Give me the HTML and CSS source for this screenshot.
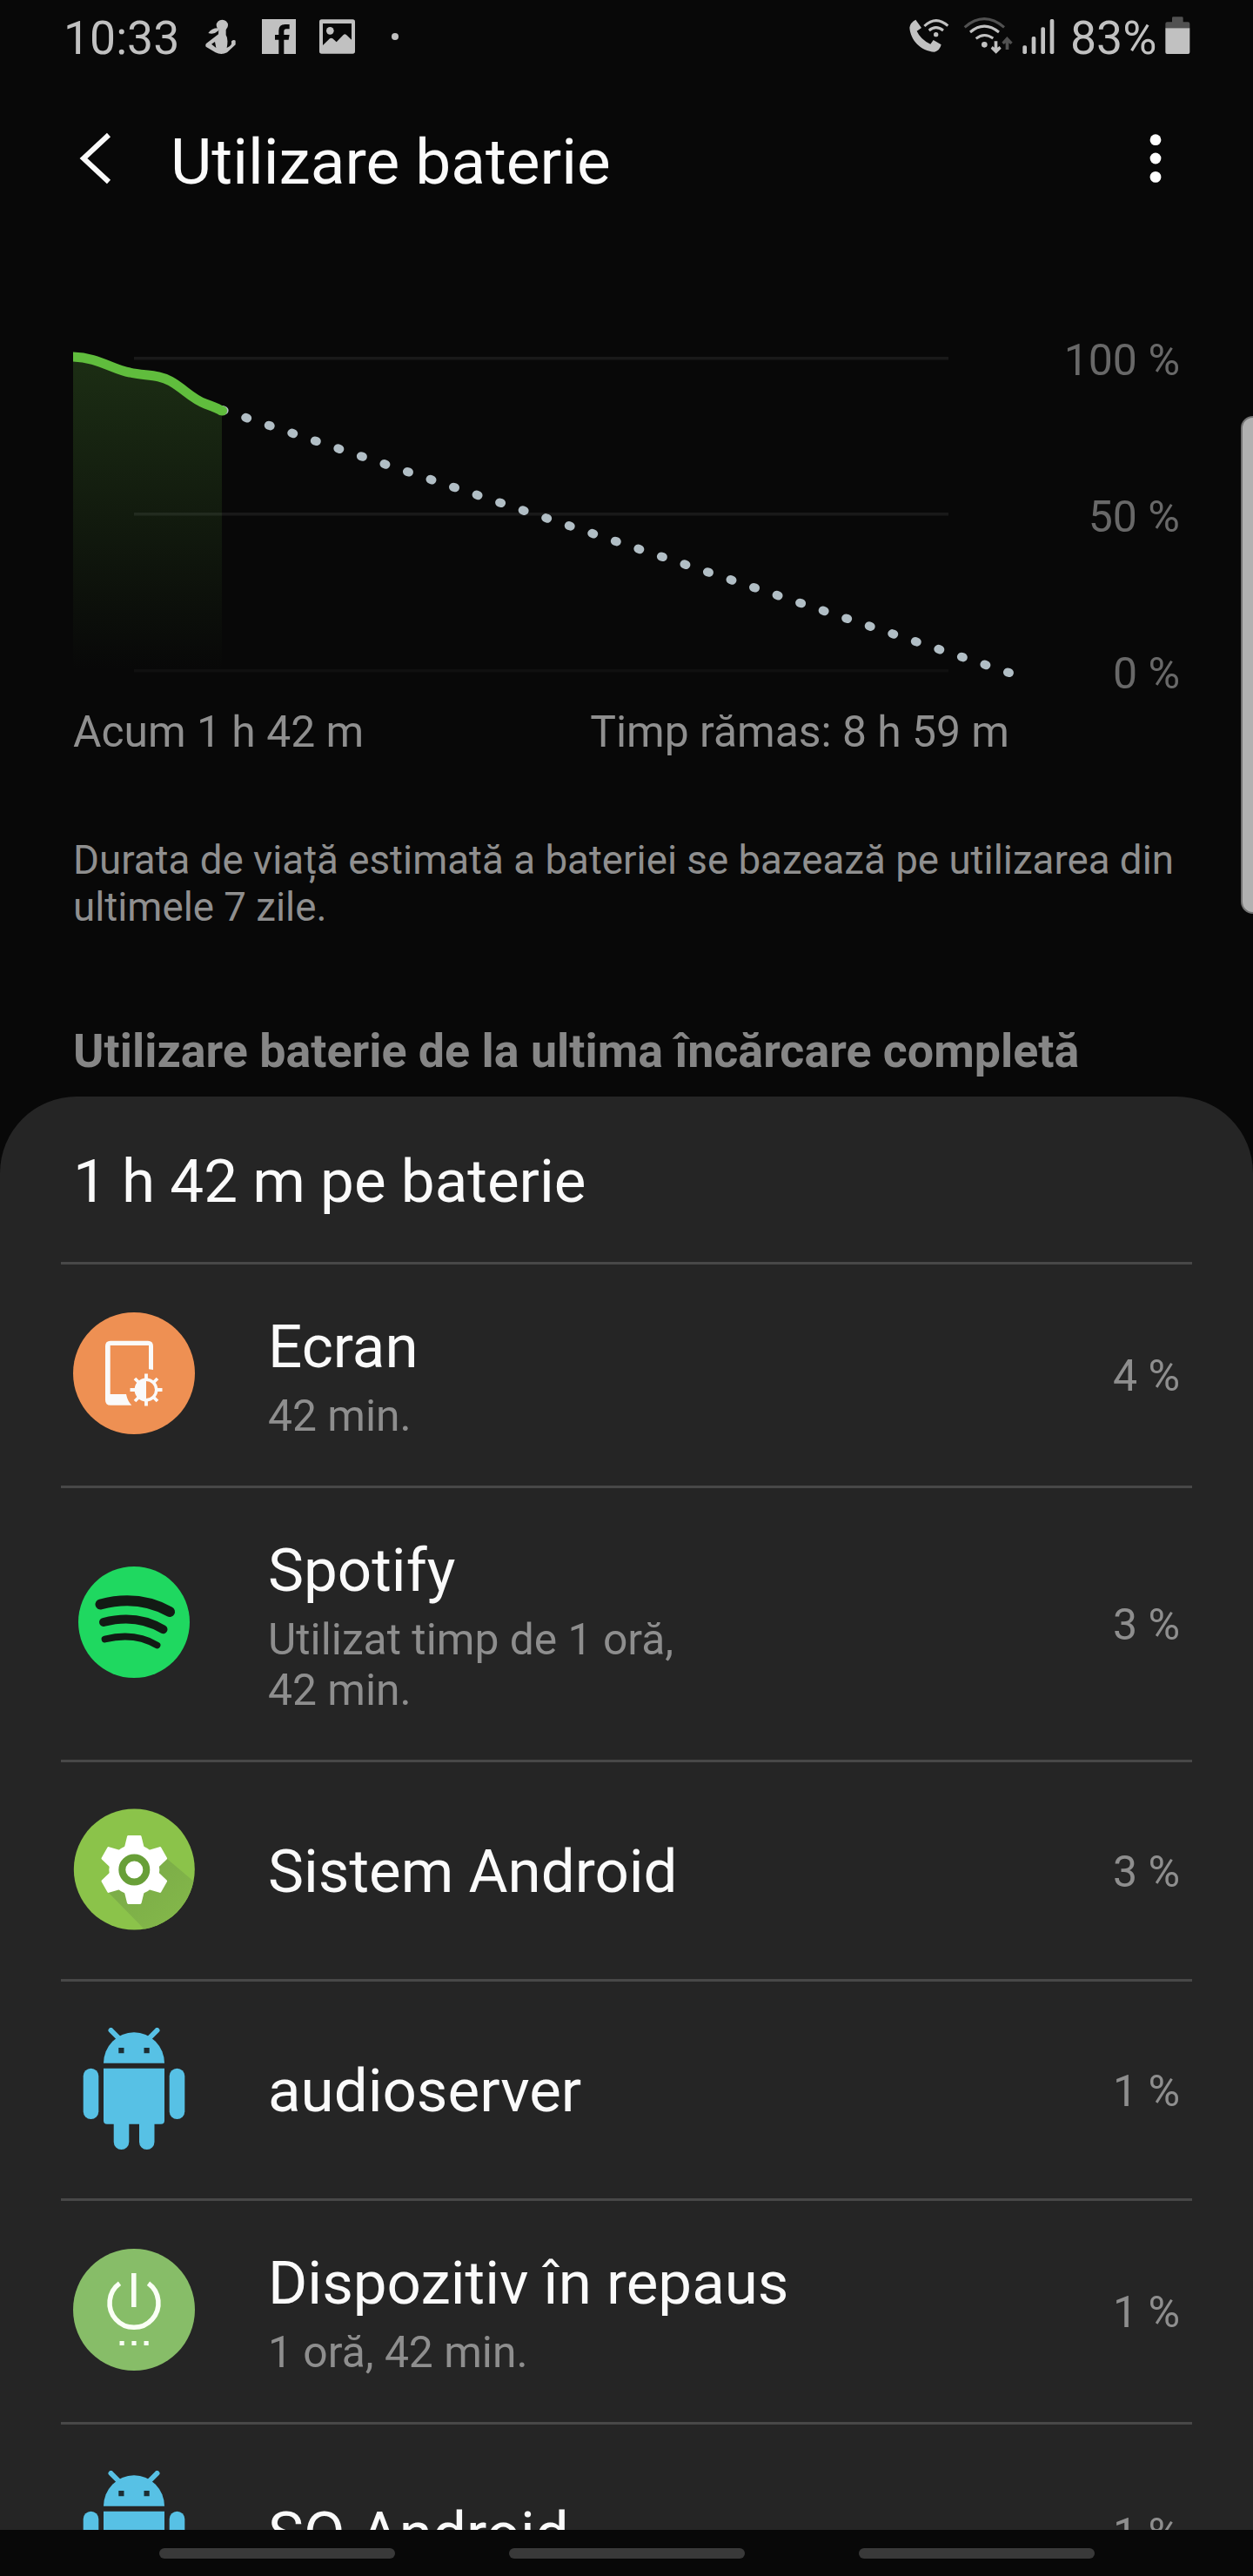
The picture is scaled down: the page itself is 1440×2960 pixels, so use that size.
FILE: index.html
```html
<!DOCTYPE html>
<html lang="ro">
<head>
    <meta charset="UTF-8">
    <title>Utilizare baterie</title>
    <link rel="stylesheet" href="styles.css">
</head>
<body>
    <div class="phone">

        <!-- status bar -->
        <div class="status">
            <span class="time">10:33</span>
            <svg class="st_person" width="36" height="40" viewBox="33 36 108 120">
                <ellipse cx="91" cy="57" rx="20" ry="19"/>
                <path d="M78 67Q55 66 43 84Q62 91 78 76Z"/>
                <path fill-rule="evenodd" d="M79 70H104V91Q113 103 107 135Q119 130 123 122V112Q131 105 137 110V124L108 151Q88 161 68 151L35 131Q32 125 36 120L78 88ZM54 122L66 114L70 135Z"/>
            </svg>
            <svg class="st_fb" width="39" height="40" viewBox="228 36 117 120">
                <path fill-rule="evenodd" d="M228 36H345V156H304V107H320L323 90H304V78Q304 70 312 70H323V54H308Q286 54 286 76V90H273V107H286V156H228Z"/>
            </svg>
            <svg class="st_img" width="41" height="40" viewBox="426 36 123 120">
                <path fill-rule="evenodd" d="M434 37H541Q549 37 549 45V147Q549 155 541 155H434Q426 155 426 147V45Q426 37 434 37ZM438 51V126L462 103Q467 99 472 103L485 115L509 90Q514 85 519 90L537 107V51Z"/>
                <circle cx="463" cy="76" r="13"/>
            </svg>
            <svg class="st_dot" width="8" height="40" viewBox="0 0 8 40"><circle cx="4" cy="20" r="4"/></svg>

            <svg class="st_call" width="46" height="42" viewBox="251 62 138 126">
                <path d="M273 70Q254 80 252 97C255 140 290 178 338 181Q356 177 361 156L334 140L324 154Q290 138 277 109L293 98Z"/>
                <g class="line"><path d="M303 92Q343 54 384 91"/><path d="M319 107Q343 87 368 107"/></g>
                <circle cx="343" cy="121" r="8"/>
            </svg>
            <svg class="st_wifi" width="57" height="43" viewBox="438 59 171 129">
                <g class="line">
                    <path class="dim_line" d="M443 96Q510 38 579 96"/>
                    <path d="M462 113Q510 72 561 113"/>
                    <path d="M482 135Q510 112 541 134"/>
                </g>
                <circle cx="511" cy="156" r="10"/>
                <path d="M545 144H556V166L563 161L569 169L551 187L533 169L539 161L545 166Z"/>
                <path class="dim" d="M584 173H595V150L601 155L608 148L589 128L571 148L578 155L584 150Z"/>
            </svg>
            <svg class="st_signal" width="37" height="40" viewBox="641 68 111 120">
                <rect x="642" y="159" width="14" height="29" rx="5"/>
                <rect x="673" y="128" width="14" height="60" rx="5"/>
                <rect x="705" y="96" width="14" height="92" rx="5"/>
                <rect x="736" y="68" width="14" height="120" rx="5"/>
            </svg>
            <span class="level">83%</span>
            <svg class="st_batt" width="29" height="43" viewBox="1136 59 87 129">
                <path class="dim" d="M1137 99V84Q1137 78 1143 78H1160V64Q1160 60 1164 60H1194Q1198 60 1198 64V78H1215Q1221 78 1221 84V99Z"/>
                <path d="M1137 99H1221V182Q1221 188 1215 188H1143Q1137 188 1137 182Z"/>
            </svg>
        </div>

        <!-- header -->
        <div class="header">
            <svg class="back" width="40" height="60" viewBox="0 0 40 60"><path d="M35 3L6 30L35 57"/></svg>
            <h1>Utilizare baterie</h1>
            <svg class="more" width="14" height="60" viewBox="0 0 14 60">
                <circle cx="7" cy="8.7" r="6.4"/><circle cx="7" cy="30" r="6.4"/><circle cx="7" cy="51.4" r="6.4"/>
            </svg>
        </div>

        <!-- battery graph -->
        <div class="chart">
            <svg width="1100" height="420" viewBox="84 384 1100 420">
                <defs>
                    <linearGradient id="fade" x1="0" y1="0" x2="0" y2="1">
                        <stop offset="0" stop-color="#1c2e14"/>
                        <stop offset="1" stop-color="#080808"/>
                    </linearGradient>
                </defs>
                <path fill="url(#fade)" d="M84 410C118 412 128 425 147 428C170 433 188 430 209 447C230 466 238 461 255 471V769H84Z"/>
                <g fill="#fff">
                    <rect x="154" y="410" width="936" height="3.5" opacity=".07"/>
                    <rect x="154" y="589" width="936" height="3.5" opacity=".07"/>
                    <rect x="154" y="769" width="936" height="3.5" opacity=".035"/>
                </g>
                <path class="rest" d="M255.7 471L1160.2 773.2"/>
                <path class="used" d="M82 410C112 410 130 425 149 428C167 432 182 430 196 438C212 447 220 458 236 464Q250 469 255.5 472.5"/>
                <circle cx="255.5" cy="472" r="5.6" fill="#60bd3d"/>
            </svg>
            <div class="axis">
                <span>100 %</span>
                <span>50 %</span>
                <span>0 %</span>
            </div>
        </div>
        <div class="times">
            <span>Acum 1 h 42 m</span>
            <span>Timp rămas: 8 h 59 m</span>
        </div>

        <p class="note">Durata de viață estimată a bateriei se bazează pe utilizarea din ultimele 7 zile.</p>
        <h2>Utilizare baterie de la ultima încărcare completă</h2>

        <!-- usage list -->
        <div class="sheet">
            <div class="sheet_title">1 h 42 m pe baterie</div>
            <ul>
                <li class="item">
                    <svg class="icon" viewBox="0 0 140 140">
                        <circle cx="70" cy="70" r="70" fill="#ee9053"/>
                        <g fill="#fafafa">
                            <path d="M43 32.7H86Q92 32.7 92 38.7V66L87 65.3V38H42.7V94H61Q62.5 102 67.3 106.7H43Q37 106.7 37 100.7V38.7Q37 32.7 43 32.7Z"/>
                            <path d="M84 77.5V100.5A11.5 11.5 0 0 1 84 77.5Z"/>
                        </g>
                        <circle cx="84" cy="89" r="11.7" fill="none" stroke="#fafafa" stroke-width="3.4"/>
                        <path fill="none" stroke="#fafafa" stroke-width="3.8" d="M84 70.5V77M84 101V107.5M65.5 89H72M96 89H102.5M71 76L75.5 80.5M92.5 97.5L97 102M97 76L92.5 80.5M71 102L75.5 97.5"/>
                    </svg>
                    <div class="info">
                        <div class="name">Ecran</div>
                        <div class="sub">42 min.</div>
                    </div>
                    <span class="percent">4 %</span>
                </li>

                <li class="item item_tall">
                    <svg class="icon" viewBox="0 0 140 140">
                        <circle cx="70" cy="70" r="64" fill="#1fd860"/>
                        <g fill="none" stroke="#121a14" stroke-linecap="round">
                            <path stroke-width="12" d="M31.5 49.5Q75 38 111 58"/>
                            <path stroke-width="10" d="M35 70Q73 60 103.5 78.3"/>
                            <path stroke-width="7.8" d="M36.5 89.5Q71 81 96.5 96.5"/>
                        </g>
                    </svg>
                    <div class="info">
                        <div class="name">Spotify</div>
                        <div class="sub">Utilizat timp de 1 oră,<br>42 min.</div>
                    </div>
                    <span class="percent">3 %</span>
                </li>

                <li class="item item_short">
                    <svg class="icon" viewBox="0 0 140 140">
                        <defs>
                            <clipPath id="round"><circle cx="70.3" cy="70" r="69.5"/></clipPath>
                            <linearGradient id="shade" x1="0" y1="0" x2="1" y2="1">
                                <stop offset=".3" stop-color="#7cad48"/>
                                <stop offset="1" stop-color="#85ba4a"/>
                            </linearGradient>
                        </defs>
                        <circle cx="70.3" cy="70" r="69.5" fill="#8bc34a"/>
                        <path clip-path="url(#round)" fill="url(#shade)" d="M40 96L107 57L140 85V140H83Z"/>
                        <g transform="translate(70.3 70.5)" fill="#fff">
                            <circle r="29"/>
                            <g stroke="#fff" stroke-width="3" stroke-linejoin="round">
                                <path id="tooth" d="M-6.8 -38H6.8L10 -25H-10ZM-6.8 38H6.8L10 25H-10Z"/>
                                <use href="#tooth" transform="rotate(60)"/>
                                <use href="#tooth" transform="rotate(120)"/>
                            </g>
                            <circle r="14" fill="none" stroke="#689f38" stroke-width="8"/>
                        </g>
                    </svg>
                    <div class="info">
                        <div class="name">Sistem Android</div>
                    </div>
                    <span class="percent">3 %</span>
                </li>

                <li class="item item_short">
                    <svg class="icon" viewBox="0 0 140 140">
                        <g id="robot" fill="#57c1e5">
                            <path d="M35 40.7A35 35.4 0 0 1 105 40.7Z"/>
                            <path d="M35 46.7H105V106.7Q105 110.7 101 110.7H93.5V131.2A8.7 8.7 0 0 1 76 131.2V110.7H64.3V131.2A8.7 8.7 0 0 1 46.7 131.2V110.7H39Q35 110.7 35 106.7Z"/>
                            <rect x="11.7" y="46.7" width="17.6" height="58.3" rx="8.8"/>
                            <rect x="110.7" y="46.7" width="17.6" height="58.3" rx="8.8"/>
                            <path stroke="#57c1e5" stroke-width="6" stroke-linecap="round" d="M43.5 3L53 12.5M96.5 3L87 12.5"/>
                            <path fill="#1c2d33" d="M52.3 23H58.5V29.3H52.3ZM81.5 23H87.7V29.3H81.5Z"/>
                        </g>
                    </svg>
                    <div class="info">
                        <div class="name">audioserver</div>
                    </div>
                    <span class="percent">1 %</span>
                </li>

                <li class="item">
                    <svg class="icon" viewBox="0 0 140 140">
                        <circle cx="70" cy="70" r="70" fill="#87bd68"/>
                        <path fill="none" stroke="#fafff5" stroke-width="5.5" d="M53.5 39.7A28 28 0 1 0 86.5 39.7M69.8 28V67"/>
                        <path fill="#fafff5" d="M53.5 106H58.7V111H53.5ZM67.4 106H72.6V111H67.4ZM81.5 106H86.7V111H81.5Z"/>
                    </svg>
                    <div class="info">
                        <div class="name">Dispozitiv în repaus</div>
                        <div class="sub">1 oră, 42 min.</div>
                    </div>
                    <span class="percent">1 %</span>
                </li>

                <li class="item item_short">
                    <svg class="icon" viewBox="0 0 140 140"><use href="#robot"/></svg>
                    <div class="info">
                        <div class="name">SO Android</div>
                    </div>
                    <span class="percent">1 %</span>
                </li>
            </ul>
        </div>

        <!-- navigation hints -->
        <div class="nav"><span></span><span></span><span></span></div>

        <!-- edge panel handle -->
        <div class="edge"></div>
    </div>
</body>
</html>
```
FILE: styles.css
```css
* {
    padding: 0;
    margin: 0;
    box-sizing: border-box;
}
body {
    background-color: #080808;
    font-family: Roboto, "Liberation Sans", sans-serif;
    color: #fafafa;
}
ul {
    list-style: none;
}
svg {
    display: block;
    flex: none;
}
.phone {
    width: 1440px;
    height: 2960px;
    display: flex;
    flex-direction: column;
    overflow: hidden;
    position: relative;
}

/* status bar */
.status {
    height: 80px;
    flex: none;
    padding: 12px 72px 0 73px;
    display: flex;
    align-items: baseline;
    font-size: 53.5px;
    line-height: 63px;
    color: #c1c1c1;
    fill: #c1c1c1;
}
.time {
    width: 163px;
}
.st_fb {
    margin-left: 29px;
}
.st_img {
    margin-left: 27px;
}
.st_dot {
    margin-left: 42px;
}
.st_call {
    margin-left: auto;
}
.st_wifi {
    margin-left: 16px;
}
.st_signal {
    margin-left: 11px;
}
.level {
    width: 98px;
    margin-left: 18px;
}
.st_batt {
    margin-left: 11px;
}
.line {
    fill: none;
    stroke: #c1c1c1;
    stroke-width: 9;
}
.dim {
    fill: #515151;
}
.dim_line {
    stroke: #515151;
}

/* header */
.header {
    height: 212px;
    flex: none;
    padding: 0 105px 0 90px;
    display: flex;
    align-items: center;
}
.header h1 {
    flex: 1;
    margin-left: 66px;
    font-size: 73px;
    font-weight: normal;
}
.back {
    margin-bottom: 8px;
    fill: none;
    stroke: #fafafa;
    stroke-width: 6;
}
.more {
    margin-bottom: 8px;
    fill: #fff;
}

/* graph */
.chart {
    margin-top: 92px;
    padding: 0 84px;
    display: flex;
    justify-content: space-between;
}
.used {
    fill: none;
    stroke: #60bd3d;
    stroke-width: 11;
}
.rest {
    fill: none;
    stroke: #b1bec5;
    stroke-width: 10;
    stroke-linecap: round;
    stroke-dasharray: 2 25.98;
}
.axis {
    display: flex;
    flex-direction: column;
    justify-content: space-between;
    font-size: 50px;
    line-height: 60px;
    text-align: right;
    color: #686868;
}
.times {
    width: 1160px;
    margin-top: 7px;
    padding-left: 84px;
    display: flex;
    justify-content: space-between;
    font-size: 49.8px;
    line-height: 60px;
    color: #8f8f8f;
}
.note {
    margin-top: 91px;
    padding: 0 84px;
    font-size: 45.7px;
    line-height: 54px;
    color: #8f8f8f;
}
.phone h2 {
    margin-top: 106px;
    padding: 0 84px;
    font-size: 53.8px;
    line-height: 64px;
    color: #868686;
}

/* usage list */
.sheet {
    flex: 1;
    min-height: 0;
    margin-top: 20px;
    background-color: #252525;
    border-radius: 88px 88px 0 0;
    overflow: hidden;
}
.sheet_title {
    height: 190px;
    padding-left: 84px;
    font-size: 69.2px;
    line-height: 196px;
}
.item {
    height: 257px;
    margin: 0 70px;
    padding: 0 14px;
    border-top: 3px solid #484848;
    display: flex;
    align-items: center;
}
.item_tall {
    height: 315px;
}
.item_short {
    height: 252px;
}
.icon {
    width: 140px;
    height: 140px;
    margin-bottom: 4px;
}
.info {
    flex: 1;
    margin-left: 84px;
    padding-top: 2px;
}
.name {
    font-size: 69.1px;
    line-height: 84px;
}
.sub {
    margin-top: 8px;
    font-size: 49.8px;
    line-height: 58px;
    color: #8e8e8e;
}
.percent {
    padding-top: 2px;
    font-size: 50px;
    line-height: 60px;
    color: #8e8e8e;
}

/* navigation hints */
.nav {
    height: 53px;
    flex: none;
    padding-top: 1px;
    display: flex;
    align-items: center;
    justify-content: center;
    gap: 131px;
}
.nav span {
    width: 271px;
    height: 12px;
    border-radius: 6px;
    background-color: #393939;
}

/* edge panel handle, over everything */
.edge {
    width: 20px;
    height: 572px;
    border: 2px solid #737373;
    border-radius: 14px 0 0 14px;
    background-color: #b1b1b1;
    position: absolute;
    right: -6px;
    top: 478px;
}
```
